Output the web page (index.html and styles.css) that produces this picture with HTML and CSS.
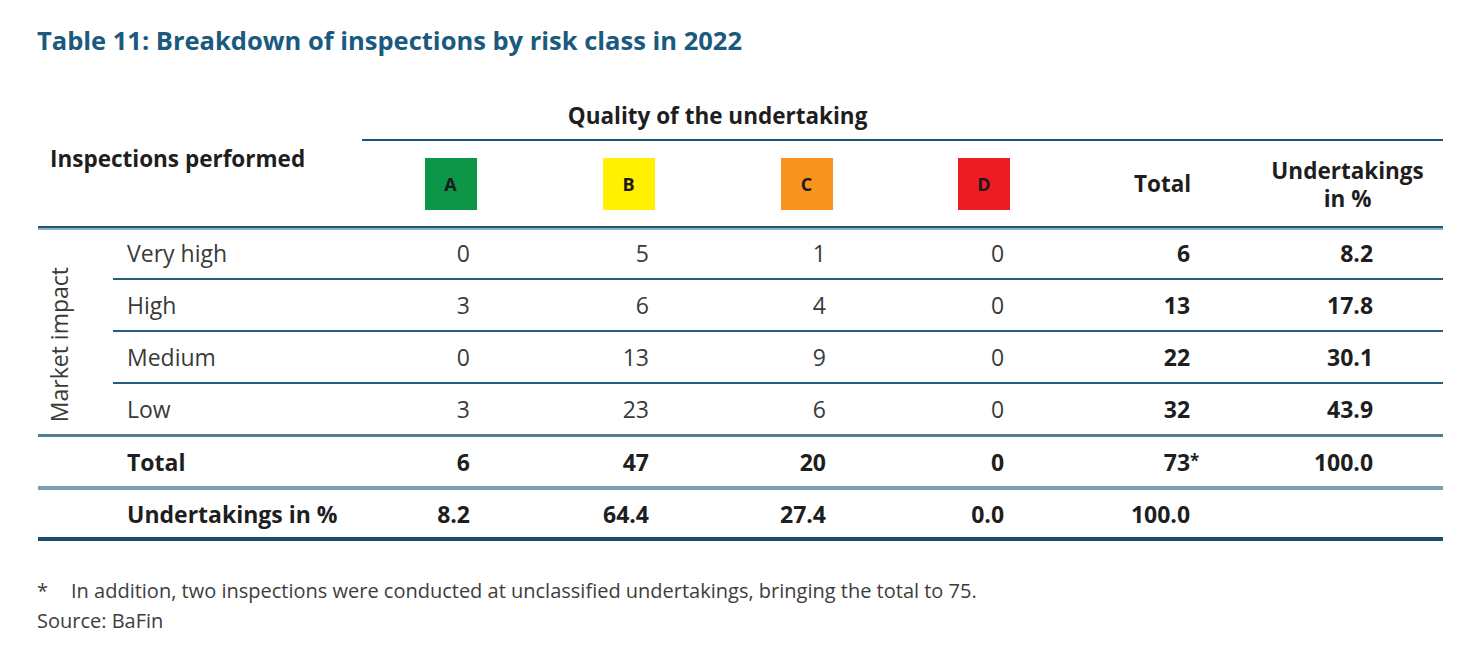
FILE: index.html
```html
<!DOCTYPE html>
<html lang="en">
<head>
<meta charset="utf-8">
<title>Table 11: Breakdown of inspections by risk class in 2022</title>
<link rel="stylesheet" href="styles.css">
</head>
<body>
<div class="page">
  <h1 class="title">Table 11: Breakdown of inspections by risk class in 2022</h1>
  <table class="risk">
    <colgroup>
      <col class="c-side">
      <col class="c-label">
      <col class="c-a">
      <col class="c-b">
      <col class="c-c">
      <col class="c-d">
      <col class="c-total">
      <col class="c-pct">
    </colgroup>
    <thead>
      <tr class="hrow1">
        <th colspan="2" rowspan="2" class="insp">Inspections performed</th>
        <th colspan="4" class="quality">Quality of the undertaking</th>
        <th class="quality"></th>
        <th class="quality"></th>
      </tr>
      <tr class="hrow2">
        <th class="cls"><span class="box box-a">A</span></th>
        <th class="cls"><span class="box box-b">B</span></th>
        <th class="cls"><span class="box box-c">C</span></th>
        <th class="cls"><span class="box box-d">D</span></th>
        <th class="cls">Total</th>
        <th class="cls two-line">Undertakings<br>in %</th>
      </tr>
    </thead>
    <tbody>
      <tr class="row first">
        <td rowspan="4" class="side"><span class="vert">Market impact</span></td>
        <td class="label">Very high</td>
        <td class="num">0</td><td class="num">5</td><td class="num">1</td><td class="num">0</td>
        <td class="num tot">6</td><td class="num pct">8.2</td>
      </tr>
      <tr class="row">
        <td class="label">High</td>
        <td class="num">3</td><td class="num">6</td><td class="num">4</td><td class="num">0</td>
        <td class="num tot">13</td><td class="num pct">17.8</td>
      </tr>
      <tr class="row">
        <td class="label">Medium</td>
        <td class="num">0</td><td class="num">13</td><td class="num">9</td><td class="num">0</td>
        <td class="num tot">22</td><td class="num pct">30.1</td>
      </tr>
      <tr class="row last">
        <td class="label">Low</td>
        <td class="num">3</td><td class="num">23</td><td class="num">6</td><td class="num">0</td>
        <td class="num tot">32</td><td class="num pct">43.9</td>
      </tr>
      <tr class="sum total-row">
        <td class="blank"></td>
        <td class="label">Total</td>
        <td class="num">6</td><td class="num">47</td><td class="num">20</td><td class="num">0</td>
        <td class="num tot">73<span class="mark">*</span></td><td class="num pct">100.0</td>
      </tr>
      <tr class="sum pct-row">
        <td class="blank"></td>
        <td class="label">Undertakings in %</td>
        <td class="num">8.2</td><td class="num">64.4</td><td class="num">27.4</td><td class="num">0.0</td>
        <td class="num tot">100.0</td><td class="num pct"></td>
      </tr>
    </tbody>
  </table>
  <div class="notes">
    <p class="note"><span class="star">*</span>In addition, two inspections were conducted at unclassified undertakings, bringing the total to 75.</p>
    <p class="source">Source: BaFin</p>
  </div>
</div>
</body>
</html>
```

FILE: styles.css
```css
html, body {
  margin: 0;
  padding: 0;
  background: #ffffff;
}

.page {
  padding: 24px 0 0 37px;
  font-family: "Open Sans", "Liberation Sans", sans-serif;
  color: #3a3a3a;
}

.title {
  margin: 0;
  font-size: 25.5px;
  line-height: 32px;
  font-weight: 700;
  color: #1a5a7e;
}

.risk {
  margin-top: 36px;
  margin-left: 1px;
  border-collapse: separate;
  border-spacing: 0;
  table-layout: fixed;
  width: 1405px;
  font-size: 23px;
}

.c-side { width: 75px; }
.c-label { width: 249px; }
.c-a { width: 177px; }
.c-b { width: 179px; }
.c-c { width: 177px; }
.c-d { width: 178px; }
.c-total { width: 179px; }
.c-pct { width: 191px; }

.risk th,
.risk td {
  padding: 0;
}

.risk th {
  font-weight: 700;
  font-size: 22.5px;
  color: #1e1e1e;
}

.insp {
  text-align: left;
  vertical-align: middle;
  padding-left: 12px !important;
  padding-bottom: 2px !important;
  border-bottom: 2px solid #1d5576;
}

.hrow1 th.quality {
  height: 47px;
  border-bottom: 2px solid #1d5576;
  vertical-align: middle;
  text-align: center;
}

.hrow2 th {
  height: 83px;
  vertical-align: middle;
  text-align: center;
  border-bottom: 2px solid #1d5576;
  line-height: 28px;
}

.hrow2 th.two-line {
  padding-top: 2px;
}

.hrow2 th,
.insp {
  box-shadow: 0 2px 0 #8fb0c2;
}

.box {
  display: inline-block;
  width: 52px;
  height: 52px;
  line-height: 52px;
  font-size: 18px;
  font-weight: 700;
  color: #1a1a1a;
  vertical-align: middle;
}

.box-a { background: #0d9648; }
.box-b { background: #fff100; }
.box-c { background: #f7941d; }
.box-d { background: #ed1c24; }

.row td {
  height: 50px;
  vertical-align: middle;
  border-bottom: 2px solid #245f80;
}

.row td.side {
  border-bottom: 3px solid #4f7f98;
  vertical-align: bottom;
  text-align: left;
  padding-left: 8px;
  padding-bottom: 5px;
}

.row.last td {
  border-bottom: 3px solid #4f7f98;
}

.vert {
  display: inline-block;
  writing-mode: vertical-rl;
  transform: rotate(180deg);
  font-size: 23px;
  color: #3a3a3a;
  line-height: 26px;
}

.label {
  text-align: left;
  padding-left: 14px !important;
  color: #3a3a3a;
}

.num {
  text-align: right;
  padding-right: 69px !important;
  color: #3a3a3a;
}

.num.tot {
  padding-right: 62px !important;
  font-weight: 700;
  color: #1e1e1e;
}

.num.pct {
  padding-right: 70px !important;
  font-weight: 700;
  color: #1e1e1e;
}

.sum td {
  vertical-align: middle;
  font-weight: 700;
  color: #1e1e1e;
}

.total-row td {
  height: 49px;
  border-bottom: 4px solid #7ba0b3;
}

.pct-row td {
  height: 47px;
  border-bottom: 4px solid #1a4e6c;
}

.mark {
  display: inline-block;
  width: 0;
  font-size: 17px;
  vertical-align: 4px;
  overflow: visible;
}

.notes {
  margin-top: 35px;
  font-size: 20px;
  color: #3d3d3d;
}

.notes p {
  margin: 0;
  line-height: 30px;
}

.star {
  display: inline-block;
  width: 34px;
}
```
